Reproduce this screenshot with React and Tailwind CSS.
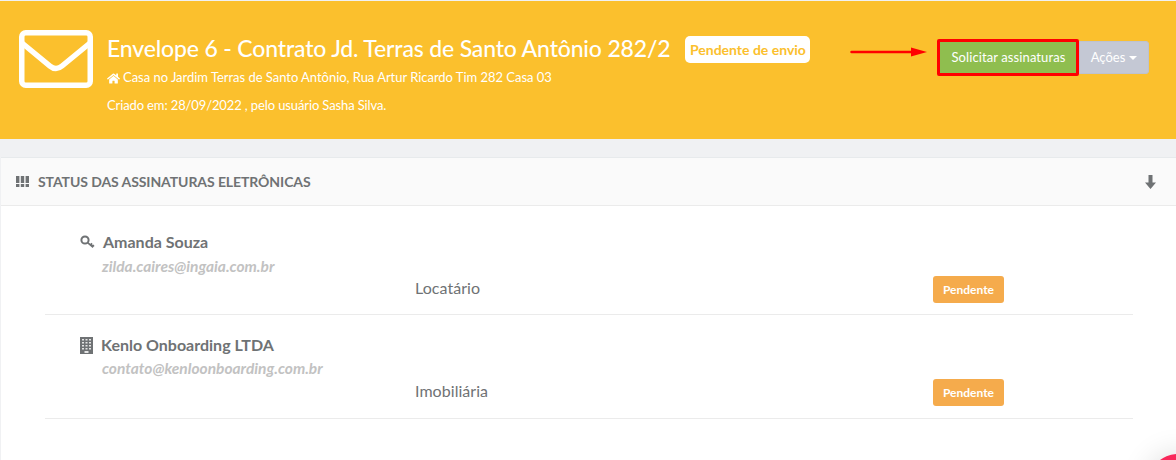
import React from 'react';
import { FaHome } from 'react-icons/fa';

const KeyIcon = () => (
    <svg width="15" height="14" viewBox="0 0 15 14" fill="none" stroke="#6f7274" strokeWidth="2">
        <circle cx="5" cy="5" r="3.6" />
        <path d="M7.6 7.6 L13.2 12.2 M10.4 9.9 L12.2 8.6 M12.4 11.5 L14 10.2" strokeWidth="1.8" />
    </svg>
);

const BuildingIcon = () => (
    <svg width="13" height="17" viewBox="0 0 13 17">
        <path fill="#6f7274" d="M0 0h13v17H0z" />
        <path fill="#e4e4e4" d="M2 2h2v1.6H2zM5.5 2h2v1.6h-2zM9 2h2v1.6H9zM2 5h2v1.6H2zM5.5 5h2v1.6h-2zM9 5h2v1.6H9zM2 8h2v1.6H2zM5.5 8h2v1.6h-2zM9 8h2v1.6H9zM2 11h2v1.6H2zM5.5 11h2v1.6h-2zM9 11h2v1.6H9zM4.5 14h4v2h-4z" />
    </svg>
);

const GridIcon = () => (
    <svg width="13" height="11" viewBox="0 0 13 11" fill="#6f7274">
        <path d="M0 0h3.4v7H0zM4.8 0h3.4v7H4.800zM9.600 0H13v7H9.600zM0 8h3.400v3H0zM4.800 8h3.400v3H4.800zM9.600 8H13v3H9.600z" />
    </svg>
);

const ArrowDownIcon = () => (
    <svg width="11" height="14" viewBox="0 0 11 14" fill="#6f7274">
        <path d="M3.500 0h4v7.500H11L5.500 14 0 7.500h3.500z" />
    </svg>
);

const EnvelopeIcon = () => (
    <svg width="74" height="58" viewBox="0 0 74 58" fill="none" stroke="white" strokeWidth="5.5" strokeLinejoin="round" strokeLinecap="round">
        <rect x="2.75" y="2.75" width="68.5" height="52.5" rx="4" />
        <path d="M3 13 L31 36 Q37 41 43 36 L71 13" />
    </svg>
);

const signers = [
    {
        name: 'Amanda Souza',
        email: 'zilda.caires@ingaia.com.br',
        role: 'Locatário',
        icon: <KeyIcon />,
        rowClass: 'pt-[21px]',
        emailClass: 'mt-[4px]',
        roleClass: 'mt-0',
    },
    {
        name: 'Kenlo Onboarding LTDA',
        email: 'contato@kenloonboarding.com.br',
        role: 'Imobiliária',
        icon: <BuildingIcon />,
        rowClass: 'pt-[20px]',
        emailClass: 'mt-[3px]',
        roleClass: 'mt-[1px]',
    },
];

const SignerRow = ({ signer }) => (
    <div className={`h-[104px] border-b border-[#ebebeb] pl-[35px] ${signer.rowClass}`}>
        <div className="flex items-center gap-[8px] h-[20px] text-[16px] font-bold text-[#6f7274]">
            {signer.icon}
            <span>{signer.name}</span>
        </div>
        <div className={`h-[20px] pl-[22px] text-[15.5px] leading-[20px] font-bold italic text-[#c2c2c2] ${signer.emailClass}`}>{signer.email}</div>
        <div className={`flex items-center h-[27px] ${signer.roleClass}`}>
            <div className="w-[853px] pl-[335px] mb-[4px] text-[16px] tracking-[0.05px] text-[#6f7274] whitespace-nowrap">{signer.role}</div>
            <div className="flex items-center justify-center w-[71px] h-[27px] rounded-[3px] bg-[#f5ab4c] text-white text-[12px] font-bold">Pendente</div>
        </div>
    </div>
);

export default function App() {
    return (
        <div className="relative w-[1176px] h-[460px] overflow-hidden bg-[#f0f1f3] font-['Lato','Liberation_Sans',sans-serif]">
            <header className="mt-px h-[138px] bg-[#fbc02d] flex items-start pl-[19px] pr-[27px] text-white">
                <div className="mt-[29px]">
                    <EnvelopeIcon />
                </div>
                <div className="ml-[14px] mt-[31px] flex-1">
                    <div className="flex items-center h-[32px]">
                        <h1 className="text-[23px] tracking-[-0.16px] leading-[32px] font-medium whitespace-nowrap">Envelope 6 - Contrato Jd. Terras de Santo Antônio 282/2</h1>
                        <span className="ml-[15px] mt-[3px] flex items-center justify-center h-[27px] w-[125px] rounded-[5px] bg-white text-[#fbc02d] text-[14px] font-bold">Pendente de envio</span>
                    </div>
                    <div className="flex items-center gap-[3px] mt-[4px] h-[20px] text-[13px] tracking-[-0.03px]">
                        <FaHome className="text-[13px]" />
                        <span>Casa no Jardim Terras de Santo Antônio, Rua Artur Ricardo Tim 282 Casa 03</span>
                    </div>
                    <div className="mt-[7px] h-[20px] text-[13px] tracking-[-0.12px] leading-[20px]">Criado em: 28/09/2022 , pelo usuário Sasha Silva.</div>
                </div>
                <div className="mt-[38px] flex items-center">
                    <svg width="78" height="12" viewBox="0 0 78 12" className="mr-[9px] mb-[11px]">
                        <path d="M1.500 6 H62" stroke="#f00" strokeWidth="2.500" strokeLinecap="round" />
                        <path d="M61 1.500 L77 6 L61 10.500 Z" fill="#f00" />
                    </svg>
                    <button className="flex items-center justify-center w-[142px] h-[37px] pl-px border-[3px] border-[#f00] rounded-[2px] bg-[#8fbe4f] text-[13px] tracking-[0.1px] text-white">Solicitar assinaturas</button>
                    <button className="flex items-center justify-center gap-[4px] w-[70px] h-[33px] rounded-r-[3px] bg-[#c4c8d4] border border-[#bec2ce] text-[13px] text-white">
                        Ações
                        <span className="w-0 h-0 border-x-[4px] border-x-transparent border-t-[4px] border-t-white" />
                    </button>
                </div>
            </header>

            <section className="mt-[18px] ml-px h-[303px] bg-white border-t border-[#e7eaec]">
                <div className="flex items-center justify-between h-[48px] pl-[15px] pr-[20px] bg-[#fafafa] border-b border-[#ebebeb] text-[#6f7274]">
                    <div className="flex items-center gap-[9px]">
                        <GridIcon />
                        <h2 className="text-[14px] tracking-[-0.08px] font-bold">STATUS DAS ASSINATURAS ELETRÔNICAS</h2>
                    </div>
                    <ArrowDownIcon />
                </div>
                <div className="pt-[5px] pl-[44px] pr-[43px]">
                    {signers.map((signer) => (
                        <SignerRow key={signer.email} signer={signer} />
                    ))}
                </div>
            </section>

            <div className="absolute left-[1148px] top-[454px] w-[60px] h-[60px] rounded-full bg-[#f9285a] shadow-[0_0_30px_rgba(0,0,0,0.14)]" />
        </div>
    );
}
